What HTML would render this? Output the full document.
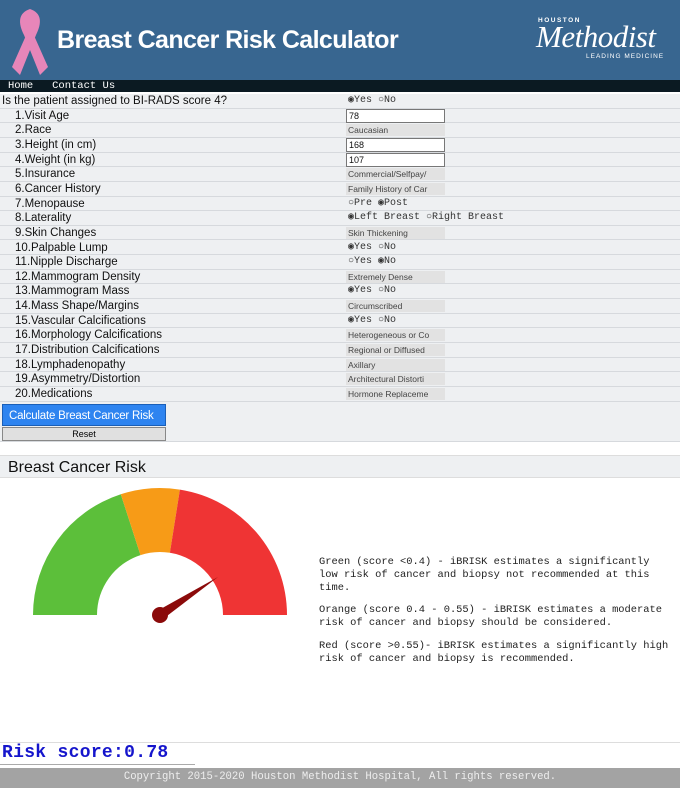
<!DOCTYPE html>
<html><head><meta charset="utf-8"><style>
*{box-sizing:border-box;margin:0;padding:0}
body{width:680px;height:788px;overflow:hidden;background:#fff;font-family:"Liberation Sans",sans-serif;position:relative}
.hdr{position:absolute;left:0;top:0;width:680px;height:80px;background:#386690}
.title{position:absolute;left:57px;top:26px;color:#fff;font:bold 25px "Liberation Sans",sans-serif;letter-spacing:-0.6px}
.nav{position:absolute;left:0;top:80px;width:680px;height:12px;background:#0b1a22;color:#fff;font:10.5px "Liberation Mono",monospace;line-height:12px;padding-left:8px}
.form{position:absolute;left:0;top:94px;width:680px;height:310px;background:#eef0f2}
.row{position:absolute;left:0;width:680px;height:14.65px;border-bottom:1px solid #d6d9dd;font-size:11.5px;line-height:14px;color:#111}
.lab{position:absolute;left:15px}
.val{position:absolute;left:346px;top:1px;width:99px;height:12px;background:#e2e2e2;font-size:8.5px;line-height:12px;padding-left:2px;color:#444;overflow:hidden;white-space:nowrap}
.inp{position:absolute;left:346px;top:0;width:99px;height:14px;background:#fff;border:1px solid #777;font-size:9px;line-height:12px;padding-left:2px}
.rad{position:absolute;left:348px;font:10px "Liberation Mono",monospace;color:#333}
.btn{position:absolute;left:2px;top:404px;width:164px;height:22px;background:#2e84f0;color:#fff;font-size:11.5px;line-height:22px;padding-left:6px;border:1px solid #1a5fb8;white-space:nowrap;overflow:hidden;letter-spacing:-0.2px}
.rst{position:absolute;left:2px;top:427px;width:164px;height:14px;background:#e0e0e0;border:1px solid #888;font-size:9px;text-align:center;line-height:12px}
.sec{position:absolute;left:0;top:455px;width:680px;height:23px;background:#eef0f2;border-top:1px solid #ddd;border-bottom:1px solid #ddd;font-size:16px;padding-left:8px;line-height:23px;color:#111}
.txt{position:absolute;left:319px;font:10.4px "Liberation Mono",monospace;color:#222;line-height:13px;width:352px}
.risk{position:absolute;left:2px;top:743px;font:bold 18px "Liberation Mono",monospace;color:#1515cc;letter-spacing:0.3px}
.foot{position:absolute;left:0;top:768px;width:680px;height:20px;background:#a3a3a3;color:#eee;font:10.6px "Liberation Mono",monospace;text-align:center;line-height:18px}
</style></head><body>
<div class="hdr">
<svg style="position:absolute;left:6px;top:5px" width="48" height="70" viewBox="0 0 48 70"><path d="M14 70 L30 30 C36 18 36 8 24 4 C12 8 12 18 18 30 L34 70 L42 62 L26 26 C30 18 28 12 24 11 C20 12 18 18 22 26 L6 62 Z" fill="#e786b9"/></svg>
<div class="title">Breast Cancer Risk Calculator</div>
<div style="position:absolute;left:538px;top:17px;color:#fff;font:bold 6.5px sans-serif;letter-spacing:1.5px">HOUSTON</div>
<div style="position:absolute;left:536px;top:19px;color:#fff;font:italic 31px 'Liberation Serif',serif;letter-spacing:-0.5px">Methodist</div>
<div style="position:absolute;left:586px;top:53px;color:#fff;font:6.5px sans-serif;letter-spacing:1px">LEADING MEDICINE</div>
</div>
<div class="nav">Home&nbsp;&nbsp;&nbsp;Contact Us</div>
<div class="form">
<div class="row" style="top:0"><span class="lab" style="left:2px">Is the patient assigned to BI-RADS score 4?</span><span class="rad">◉Yes ○No</span></div>
<div class="row" style="top:14.65px"><span class="lab">1.Visit Age</span><span class="inp">78</span></div>
<div class="row" style="top:29.3px"><span class="lab">2.Race</span><span class="val">Caucasian</span></div>
<div class="row" style="top:43.95px"><span class="lab">3.Height (in cm)</span><span class="inp">168</span></div>
<div class="row" style="top:58.6px"><span class="lab">4.Weight (in kg)</span><span class="inp">107</span></div>
<div class="row" style="top:73.25px"><span class="lab">5.Insurance</span><span class="val">Commercial/Selfpay/</span></div>
<div class="row" style="top:87.9px"><span class="lab">6.Cancer History</span><span class="val">Family History of Car</span></div>
<div class="row" style="top:102.55px"><span class="lab">7.Menopause</span><span class="rad">○Pre ◉Post</span></div>
<div class="row" style="top:117.2px"><span class="lab">8.Laterality</span><span class="rad">◉Left Breast ○Right Breast</span></div>
<div class="row" style="top:131.85px"><span class="lab">9.Skin Changes</span><span class="val">Skin Thickening</span></div>
<div class="row" style="top:146.5px"><span class="lab">10.Palpable Lump</span><span class="rad">◉Yes ○No</span></div>
<div class="row" style="top:161.15px"><span class="lab">11.Nipple Discharge</span><span class="rad">○Yes ◉No</span></div>
<div class="row" style="top:175.8px"><span class="lab">12.Mammogram Density</span><span class="val">Extremely Dense</span></div>
<div class="row" style="top:190.45px"><span class="lab">13.Mammogram Mass</span><span class="rad">◉Yes ○No</span></div>
<div class="row" style="top:205.1px"><span class="lab">14.Mass Shape/Margins</span><span class="val">Circumscribed</span></div>
<div class="row" style="top:219.75px"><span class="lab">15.Vascular Calcifications</span><span class="rad">◉Yes ○No</span></div>
<div class="row" style="top:234.4px"><span class="lab">16.Morphology Calcifications</span><span class="val">Heterogeneous or Co</span></div>
<div class="row" style="top:249.05px"><span class="lab">17.Distribution Calcifications</span><span class="val">Regional or Diffused</span></div>
<div class="row" style="top:263.7px"><span class="lab">18.Lymphadenopathy</span><span class="val">Axillary</span></div>
<div class="row" style="top:278.35px"><span class="lab">19.Asymmetry/Distortion</span><span class="val">Architectural Distorti</span></div>
<div class="row" style="top:293px"><span class="lab">20.Medications</span><span class="val">Hormone Replaceme</span></div>
</div>
<div style="position:absolute;left:0;top:404px;width:680px;height:38px;background:#eef0f2;border-bottom:1px solid #d6d9dd"></div>
<div class="btn">Calculate Breast Cancer Risk</div>
<div class="rst">Reset</div>
<div class="sec">Breast Cancer Risk</div>
<svg style="position:absolute;left:0;top:478px" width="310" height="170" viewBox="0 478 310 170">
<path d="M33 615 A127 127 0 0 1 120.8 494.2 L140.5 555.1 A63 63 0 0 0 97 615 Z" fill="#5cbf3a"/>
<path d="M120.8 494.2 A127 127 0 0 1 179.9 489.6 L169.9 552.8 A63 63 0 0 0 140.5 555.1 Z" fill="#f79b17"/>
<path d="M179.9 489.6 A127 127 0 0 1 287 615 L223 615 A63 63 0 0 0 169.9 552.8 Z" fill="#ef3434"/>
<path d="M157 611 L218 577 L163 619 Z" fill="#8b0a0a"/>
<circle cx="160" cy="615" r="8" fill="#8b0a0a"/>
</svg>
<div class="txt" style="top:556px">Green (score &lt;0.4) - iBRISK estimates a significantly low risk of cancer and biopsy not recommended at this time.</div>
<div class="txt" style="top:604px">Orange (score 0.4 - 0.55) - iBRISK estimates a moderate risk of cancer and biopsy should be considered.</div>
<div class="txt" style="top:640px">Red (score &gt;0.55)- iBRISK estimates a significantly high risk of cancer and biopsy is recommended.</div>
<div style="position:absolute;left:0;top:742px;width:680px;border-top:1px solid #ddd"></div>
<div class="risk">Risk score:0.78</div>
<div style="position:absolute;left:0;top:764px;width:195px;border-top:1px solid #aaa"></div>
<div class="foot">Copyright 2015-2020 Houston Methodist Hospital, All rights reserved.</div>
</body></html>
